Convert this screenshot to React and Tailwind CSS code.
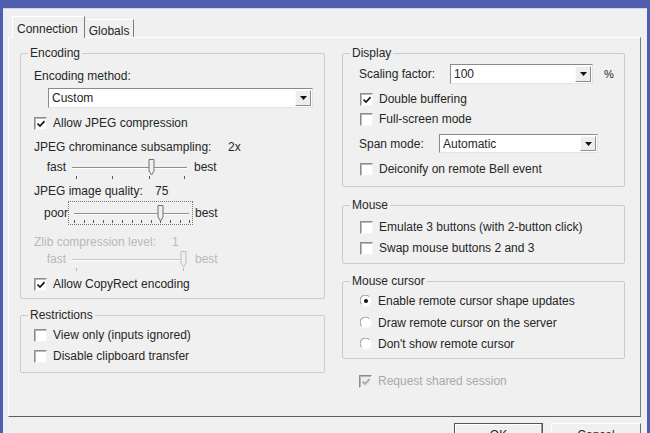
import React from 'react';

const Check = ({ checked, disabled }) => (
  <span
    className={`relative inline-block w-[13px] h-[13px] shrink-0 border border-t-[#8d8d8d] border-l-[#8d8d8d] border-r-[#f4f4f4] border-b-[#f4f4f4] shadow-[inset_1px_1px_0_#b8b8b8] ${
      disabled ? 'bg-[#ececec]' : 'bg-white'
    }`}
  >
    {checked && (
      <svg className="absolute left-[2px] top-[2px]" width="8" height="8" viewBox="0 0 8 8">
        <path d="M0.5 3.5 L3 6 L7.5 1.2" fill="none" stroke={disabled ? '#a8a8a8' : '#1a1a1a'} strokeWidth="1.7" />
      </svg>
    )}
  </span>
);

const Radio = ({ checked }) => (
  <svg width="12" height="12" viewBox="0 0 12 12" className="shrink-0">
    <circle cx="6" cy="6" r="5.5" fill="#fff" />
    <path d="M1.6 9.2 A5 5 0 0 1 9.2 1.6" fill="none" stroke="#8a8a8a" strokeWidth="1" />
    <path d="M9.8 2.6 A5 5 0 0 1 2.6 9.8" fill="none" stroke="#f6f6f6" strokeWidth="1" />
    {checked && <circle cx="6" cy="6" r="2" fill="#111" />}
  </svg>
);

const Item = ({ children, checked, disabled, radio, className = '' }) => (
  <div className={`flex items-center h-[20px] ${className}`}>
    {radio ? <Radio checked={checked} /> : <Check checked={checked} disabled={disabled} />}
    <span className={`ml-[6px] ${disabled ? 'text-[#a9a9a9]' : ''}`}>{children}</span>
  </div>
);

const DropDown = ({ value, className = '' }) => (
  <div
    className={`flex items-stretch bg-white border border-t-[#8a8a8a] border-l-[#8a8a8a] border-r-[#e4e4e4] border-b-[#e4e4e4] ${className}`}
  >
    <span className="flex-1 flex items-center pl-[3px] leading-none">{value}</span>
    <span className="w-[16px] my-[1px] mr-[1px] flex items-center justify-center bg-[#ededed] border border-t-[#fafafa] border-l-[#fafafa] border-r-[#8e8e8e] border-b-[#8e8e8e]">
      <svg width="7" height="4" viewBox="0 0 7 4">
        <path d="M0 0 H7 L3.5 4 Z" fill="#111" />
      </svg>
    </span>
  </div>
);

const Slider = ({ pos, ticks, trackTop, tickTop, focus, disabled, height }) => {
  const col = disabled ? '#c4c4c4' : '#8f8f8f';
  const tick = disabled ? '#b5b5b5' : '#5a5a5a';
  return (
    <div
      className={`relative w-[125px] ${focus ? 'border border-dotted border-[#777]' : ''}`}
      style={{ height }}
    >
      <div
        className="absolute left-[5px] w-[115px] h-[2px] border-t border-b border-b-white"
        style={{ top: trackTop, borderTopColor: col }}
      />
      <svg className="absolute left-0" width="125" height="4" viewBox="0 0 125 4" style={{ top: tickTop }}>
        {ticks.map((t, i) => (
          <rect key={i} x={t} y="0" width="1" height="3" fill={tick} />
        ))}
      </svg>
      <svg className="absolute" width="7" height="17" viewBox="0 0 7 17" style={{ left: pos - 3, top: trackTop - 8 }}>
        <path d="M1 0.5 H6 V12 L3.5 16 L1 12 Z" fill="#f0f0f0" stroke={disabled ? '#bdbdbd' : '#707070'} strokeWidth="1" />
      </svg>
    </div>
  );
};

const Group = ({ title, children, className = '' }) => (
  <fieldset className={`border border-[#cbcbcb] rounded-[2px] ${className}`}>
    <legend className="ml-[7px] px-[2px] h-[13px] leading-[13px]">{title}</legend>
    {children}
  </fieldset>
);

const qualityTicks = Array.from({ length: 13 }, (_, i) => Math.round(5 + i * 9.6));

export default function App() {
  return (
    <div className="w-[650px] h-[433px] overflow-hidden bg-[#4f5eae] pt-[8px] px-[3px] font-['Liberation_Sans',Arial,sans-serif] text-[12px] text-[#262626]">
      <div className="h-full bg-[#f0f0f0] border-t border-[#cfd3ea] pl-[5px] pr-[6px] pt-[6px]">
        {/* Tabs */}
        <div className="flex items-end h-[22px] pl-[4px]">
          <div className="relative z-10 h-[22px] -mb-[1px] pl-[4px] pr-[6px] pt-[3px] bg-[#f0f0f0] border-r border-[#7c7c7c] border-t border-t-white border-l border-l-white">
            Connection
          </div>
          <div className="h-[18px] ml-[2px] pl-[2px] pr-[4px] pt-[2px] border-r border-[#7c7c7c] border-t border-t-white">
            Globals
          </div>
        </div>

        {/* Tab panel */}
        <div className="h-[380px] border border-t-white border-l-[#fbfbfb] border-r-[#7a7a7a] border-b-[#5e5e5e] pl-[11px] pt-[9px] flex gap-[17px]">
          {/* Left column */}
          <div className="w-[305px] flex flex-col">
            <Group title="Encoding">
              <div className="pl-[13px] pt-[6px] pb-[4px]">
                <div className="h-[20px] flex items-center">Encoding method:</div>
                <DropDown value="Custom" className="mt-[2px] ml-[14px] w-[265px] h-[20px]" />
                <Item checked className="mt-[5px]">Allow JPEG compression</Item>
                <div className="mt-[4px] h-[20px] flex items-center">
                  <span className="w-[194px]">JPEG chrominance subsampling:</span>
                  <span>2x</span>
                </div>
                <div className="h-[24px] flex items-start">
                  <span className="w-[33px] pr-[1px] text-right leading-[20px]">fast</span>
                  <Slider pos={84} ticks={[9, 45, 82, 117]} trackTop={10} tickTop={19} height={24} />
                  <span className="ml-[2px] leading-[20px]">best</span>
                </div>
                <div className="h-[20px] flex items-center">
                  <span className="w-[121px]">JPEG image quality:</span>
                  <span>75</span>
                </div>
                <div className="h-[24px] flex items-center">
                  <span className="w-[34px] text-right">poor</span>
                  <Slider pos={91} ticks={qualityTicks} trackTop={11} tickTop={18} focus height={24} />
                  <span className="ml-[2px]">best</span>
                </div>
                <div className="mt-[7px] h-[20px] flex items-center text-[#b9b9b9]">
                  <span className="w-[138px]">Zlib compression level:</span>
                  <span>1</span>
                </div>
                <div className="h-[22px] flex items-start text-[#b9b9b9]">
                  <span className="w-[33px] pr-[1px] text-right leading-[14px]">fast</span>
                  <Slider pos={116} ticks={[9, 116]} trackTop={7} tickTop={16} disabled height={22} />
                  <span className="ml-[3px] leading-[14px]">best</span>
                </div>
                <Item checked>Allow CopyRect encoding</Item>
              </div>
            </Group>

            <Group title="Restrictions" className="mt-[10px]">
              <div className="pl-[13px] pb-[6px]">
                <Item className="mt-[3px]">View only (inputs ignored)</Item>
                <Item className="mt-[1px]">Disable clipboard transfer</Item>
              </div>
            </Group>
          </div>

          {/* Right column */}
          <div className="w-[283px] flex flex-col">
            <Group title="Display">
              <div className="pl-[16px] pb-[7px]">
                <div className="mt-[4px] h-[20px] flex items-center">
                  <span className="w-[91px]">Scaling factor:</span>
                  <DropDown value="100" className="w-[143px] h-[20px]" />
                  <span className="ml-[11px] text-[11px]">%</span>
                </div>
                <Item checked className="mt-[5px] ml-[1px]">Double buffering</Item>
                <Item className="ml-[1px]">Full-screen mode</Item>
                <div className="mt-[5px] h-[19px] flex items-center">
                  <span className="w-[80px]">Span mode:</span>
                  <DropDown value="Automatic" className="w-[159px] h-[19px]" />
                </div>
                <Item className="mt-[6px] ml-[1px]">Deiconify on remote Bell event</Item>
              </div>
            </Group>

            <Group title="Mouse" className="mt-[12px]">
              <div className="pl-[17px] pb-[5px]">
                <Item className="mt-[5px]">Emulate 3 buttons (with 2-button click)</Item>
                <Item className="mt-[1px]">Swap mouse buttons 2 and 3</Item>
              </div>
            </Group>

            <Group title="Mouse cursor" className="mt-[11px]">
              <div className="pl-[17px] pb-[4px]">
                <Item radio checked className="mt-[3px]">Enable remote cursor shape updates</Item>
                <Item radio className="mt-[2px]">Draw remote cursor on the server</Item>
                <Item radio className="mt-[1px]">Don't show remote cursor</Item>
              </div>
            </Group>

            <Item checked disabled className="mt-[12px] pl-[17px]">Request shared session</Item>
          </div>
        </div>

        {/* Buttons */}
        <div className="flex justify-end gap-[8px] mt-[6px]">
          <button className="w-[89px] h-[23px] border border-[#555] bg-[#f0f0f0] shadow-[inset_-1px_-1px_0_#9a9a9a,inset_1px_1px_0_#fff]">
            OK
          </button>
          <button className="w-[90px] h-[23px] border border-t-white border-l-white border-r-[#6c6c6c] border-b-[#6c6c6c] bg-[#f0f0f0]">
            Cancel
          </button>
        </div>
      </div>
    </div>
  );
}
